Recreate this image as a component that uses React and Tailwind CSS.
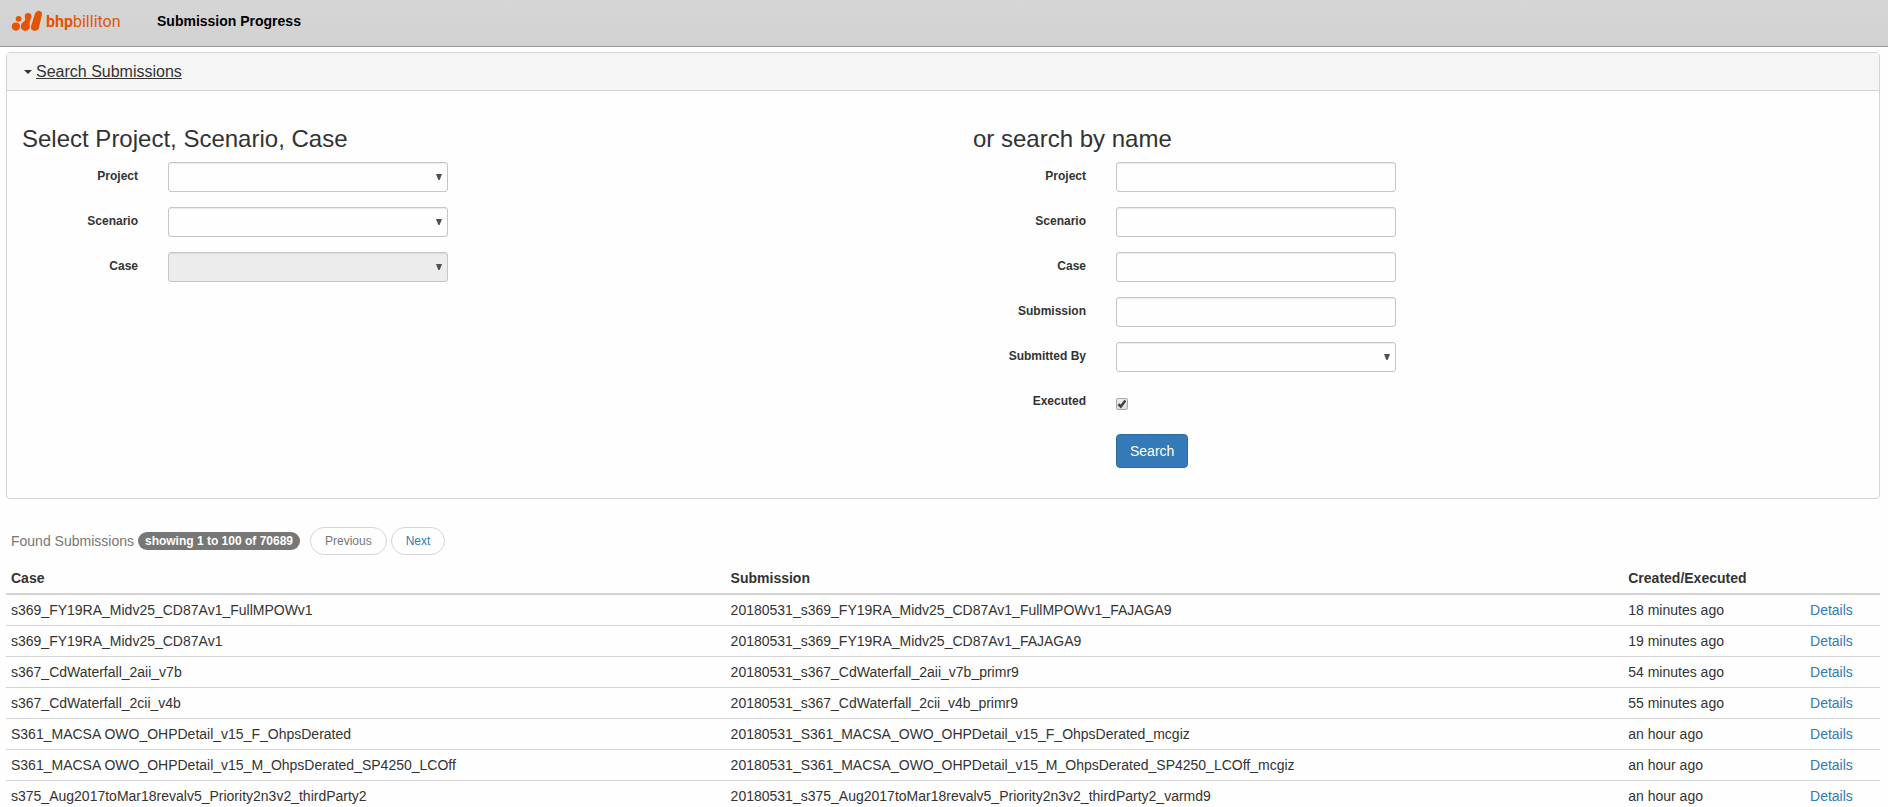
import React from 'react';

const rows = [
  ['s369_FY19RA_Midv25_CD87Av1_FullMPOWv1', '20180531_s369_FY19RA_Midv25_CD87Av1_FullMPOWv1_FAJAGA9', '18 minutes ago'],
  ['s369_FY19RA_Midv25_CD87Av1', '20180531_s369_FY19RA_Midv25_CD87Av1_FAJAGA9', '19 minutes ago'],
  ['s367_CdWaterfall_2aii_v7b', '20180531_s367_CdWaterfall_2aii_v7b_primr9', '54 minutes ago'],
  ['s367_CdWaterfall_2cii_v4b', '20180531_s367_CdWaterfall_2cii_v4b_primr9', '55 minutes ago'],
  ['S361_MACSA OWO_OHPDetail_v15_F_OhpsDerated', '20180531_S361_MACSA_OWO_OHPDetail_v15_F_OhpsDerated_mcgiz', 'an hour ago'],
  ['S361_MACSA OWO_OHPDetail_v15_M_OhpsDerated_SP4250_LCOff', '20180531_S361_MACSA_OWO_OHPDetail_v15_M_OhpsDerated_SP4250_LCOff_mcgiz', 'an hour ago'],
  ['s375_Aug2017toMar18revalv5_Priority2n3v2_thirdParty2', '20180531_s375_Aug2017toMar18revalv5_Priority2n3v2_thirdParty2_varmd9', 'an hour ago'],
];

const controlClass =
  'block h-[30px] w-full appearance-none rounded-[3px] border border-[#c6c6c6] bg-[#fefefe] px-2 text-xs shadow-[inset_0_1px_1px_rgba(0,0,0,0.075)] disabled:bg-[#ececec]';

function Logo() {
  return (
    <a href="#home" className="flex w-[112px] items-center text-[#e65400]" aria-label="bhpbilliton">
      <svg width="32" height="22" viewBox="11 6 32 22" fill="currentColor" aria-hidden="true">
        <circle cx="15.9" cy="22.6" r="4.1" />
        <circle cx="18.6" cy="14.8" r="2.9" />
        <circle cx="25.3" cy="22.4" r="4.5" />
        <circle cx="28.1" cy="12.2" r="3.3" />
        <path d="M25 13.5 C26 16 24.2 18 22 19 L29.4 24.2 C29.2 20 29.8 17.5 31.3 13.2 Z" />
        <path d="M34.9 10 C35.8 7.2 38 6.6 39.7 6.9 C41.7 7.3 42.3 8.8 41.8 11 L39.2 23 C38.6 25.8 36.6 27.2 34.2 26.8 C31.6 26.4 30.5 24.2 31.1 21.9 Z" />
      </svg>
      <span className="pt-[2px] pl-[3px] font-[Roboto,sans-serif] text-base leading-5">
        <span className="font-bold">bhp</span>billiton
      </span>
    </a>
  );
}

function Row({ id, label, labelClass, children }) {
  return (
    <div className="mb-[15px] flex min-h-[30px]">
      <label htmlFor={id} className={`${labelClass} shrink-0 pt-[6px] text-right text-xs leading-[17px] font-bold`}>
        {label}
      </label>
      <div className="ml-[30px] w-[280px]">{children}</div>
    </div>
  );
}

function Select({ id, disabled }) {
  return (
    <div className="relative">
      <select id={id} disabled={disabled} className={controlClass} />
      <svg className="pointer-events-none absolute top-3 right-[6px]" width="6" height="6" viewBox="0 0 6 6" fill="#505050" aria-hidden="true">
        <path d="M0 0 H6 L3.6 6 H2.4 Z" />
      </svg>
    </div>
  );
}

const leftLabel = 'w-[116px]';
const rightLabel = 'w-[113px]';

export default function App() {
  return (
    <div className="h-screen overflow-x-hidden overflow-y-auto bg-[#fefefe] font-['Liberation_Sans',Arial,sans-serif] text-sm leading-5 text-[#333] [scrollbar-width:none]">
      <header className="flex h-[47px] items-center border-b border-[#999] bg-linear-to-b from-[#d6d6d6] to-[#d1d1d1] px-[11px] pb-1">
        <Logo />
        <h1 className="ml-[34px] text-sm font-bold text-black">Submission Progress</h1>
      </header>

      <main className="pt-[5px] pr-2 pl-[6px]">
        <section className="rounded-[4px] border border-[#d4d4d4]">
          <div className="flex h-[38px] items-center border-b border-[#d4d4d4] bg-[#f5f5f5] px-[17px]">
            <a href="#search" className="flex items-center gap-1 text-base">
              <svg width="8" height="4" viewBox="0 0 8 4" fill="#333" aria-hidden="true">
                <path d="M0 0 H8 L4 4 Z" />
              </svg>
              <span className="underline">Search Submissions</span>
            </a>
          </div>

          <form className="grid grid-cols-[951fr_906fr] pt-[34px] pl-[15px]" onSubmit={(e) => e.preventDefault()}>
            <div>
              <h2 className="mb-[10px] text-2xl leading-[27px]">Select Project, Scenario, Case</h2>
              <Row id="project" label="Project" labelClass={leftLabel}><Select id="project" /></Row>
              <Row id="scenario" label="Scenario" labelClass={leftLabel}><Select id="scenario" /></Row>
              <Row id="case" label="Case" labelClass={leftLabel}><Select id="case" disabled /></Row>
            </div>
            <div>
              <h2 className="mb-[10px] text-2xl leading-[27px]">or search by name</h2>
              <Row id="project-name" label="Project" labelClass={rightLabel}><input id="project-name" type="text" className={controlClass} /></Row>
              <Row id="scenario-name" label="Scenario" labelClass={rightLabel}><input id="scenario-name" type="text" className={controlClass} /></Row>
              <Row id="case-name" label="Case" labelClass={rightLabel}><input id="case-name" type="text" className={controlClass} /></Row>
              <Row id="submission-name" label="Submission" labelClass={rightLabel}><input id="submission-name" type="text" className={controlClass} /></Row>
              <Row id="submitted-by" label="Submitted By" labelClass={rightLabel}><Select id="submitted-by" /></Row>
              <Row id="executed" label="Executed" labelClass={rightLabel}>
                <div className="relative mt-[11px] size-3">
                  <input
                    id="executed"
                    type="checkbox"
                    defaultChecked
                    className="peer block size-3 appearance-none rounded-[2px] border border-[#a8a8a8] bg-linear-to-b from-[#ededed] to-[#dedede]"
                  />
                  <svg className="pointer-events-none absolute inset-0 hidden peer-checked:block" width="12" height="12" viewBox="0 0 12 12" fill="none" stroke="#404040" strokeWidth="2.4" aria-hidden="true">
                    <path d="M2.4 6.2 L4.8 8.6 L9.4 2.6" />
                  </svg>
                </div>
              </Row>
              <div className="mt-[17px] mb-[30px] ml-[143px]">
                <button type="submit" className="h-[34px] rounded-[4px] border border-[#2e6da4] bg-[#337ab7] px-[13px] text-sm text-white">
                  Search
                </button>
              </div>
            </div>
          </form>
        </section>

        <div className="mt-7 flex items-center px-[5px]">
          <span className="text-[#777]">Found Submissions</span>
          <span className="ml-1 rounded-full bg-[#777] px-[7px] text-xs leading-[18px] font-bold text-white">showing 1 to 100 of 70689</span>
          <nav className="ml-[10px] flex gap-1 text-xs">
            <button type="button" className="h-7 rounded-full border border-[#d6d6d6] px-[14px] text-[#777]">Previous</button>
            <button type="button" className="h-7 rounded-full border border-[#d6d6d6] px-[14px] text-[#337ab7]">Next</button>
          </nav>
        </div>

        <table className="mt-2 w-full table-fixed border-collapse text-left">
          <colgroup>
            <col className="w-[38.4%]" />
            <col className="w-[47.9%]" />
            <col className="w-[9.7%]" />
            <col />
          </colgroup>
          <thead>
            <tr className="border-b-2 border-[#d4d4d4]">
              <th className="p-[5px]">Case</th>
              <th className="p-[5px]">Submission</th>
              <th className="p-[5px]">Created/Executed</th>
              <th className="p-[5px]"></th>
            </tr>
          </thead>
          <tbody>
            {rows.map(([name, submission, time]) => (
              <tr key={name} className="border-b border-[#d4d4d4]">
                <td className="p-[5px]">{name}</td>
                <td className="p-[5px]">{submission}</td>
                <td className="p-[5px]">{time}</td>
                <td className="p-[5px]"><a href="#details" className="text-[#337ab7]">Details</a></td>
              </tr>
            ))}
          </tbody>
        </table>
      </main>
    </div>
  );
}
